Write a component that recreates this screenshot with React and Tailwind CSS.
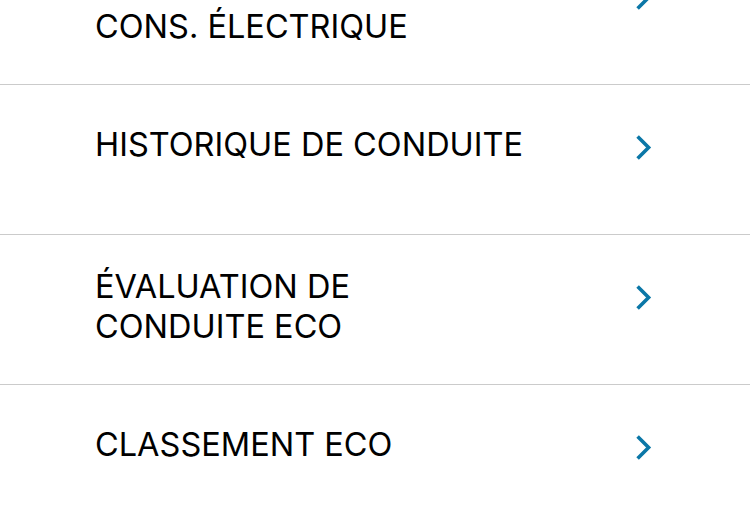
import { useState } from 'react';

const items = [
  { id: 'elec', lines: ['HISTORIQUE DE', 'CONS. ÉLECTRIQUE'] },
  { id: 'history', lines: ['HISTORIQUE DE CONDUITE'] },
  { id: 'eval', lines: ['ÉVALUATION DE', 'CONDUITE ECO'] },
  { id: 'rank', lines: ['CLASSEMENT ECO'] },
];

const Chevron = () => (
  <svg width="16" height="25" viewBox="0 0 16 25" fill="none" className="block">
    <path
      d="M1.6 1.5 12.6 12.5 1.6 23.5"
      stroke="#0b77a7"
      strokeWidth="3.6"
      strokeLinecap="butt"
      strokeLinejoin="miter"
    />
  </svg>
);

const MenuRow = ({ item, onSelect }) => (
  <button
    onClick={() => onSelect(item.id)}
    className="flex w-full h-[150px] text-left border-b border-[#cbcbcb] bg-white"
  >
    <div className="flex-1 pl-[95px] pt-[32px]">
      <div className="min-h-[55px] flex flex-col justify-center text-[32.5px] leading-[40px] text-black">
        {item.lines.map((line) => (
          <span key={line}>{line}</span>
        ))}
      </div>
    </div>
    <div className="mt-[50px] mr-[98px]">
      <Chevron />
    </div>
  </button>
);

const App = () => {
  const [selected, setSelected] = useState(null);

  return (
    <div
      className="h-[525px] w-[750px] overflow-hidden bg-white"
      style={{ fontFamily: 'Inter, "Noto Sans", sans-serif' }}
      data-selected={selected || ''}
    >
      {/* list is scrolled a little: first row is cut off at the top */}
      <div className="-mt-[65px]">
        {items.map((item) => (
          <MenuRow key={item.id} item={item} onSelect={setSelected} />
        ))}
      </div>
    </div>
  );
};

export default App;
